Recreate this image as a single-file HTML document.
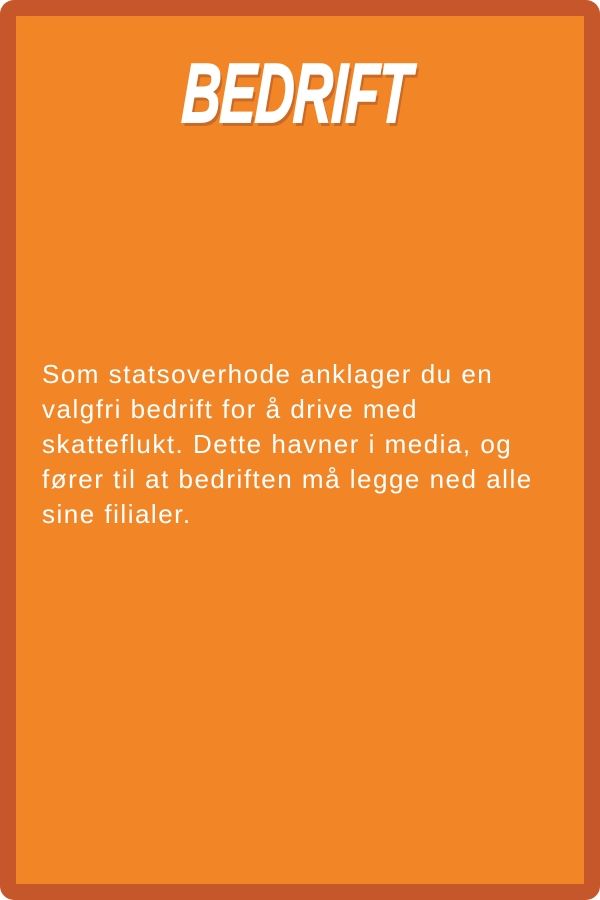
<!DOCTYPE html>
<html><head><style>
html,body{margin:0;padding:0;background:#fff;}
.card{position:absolute;left:0;top:0;width:600px;height:900px;background:#c6572a;border-radius:14px;}
.inner{position:absolute;left:16px;top:16px;width:568px;height:868px;background:#f28627;}
.title{position:absolute;left:-4px;top:48px;width:600px;text-align:center;font-family:"Liberation Sans",sans-serif;font-weight:bold;font-style:italic;font-size:84px;line-height:90px;color:#fff;text-shadow:4px 4px 0 #c96a26;}
.title span{display:inline-block;transform:scaleX(0.64) skewX(-4deg);transform-origin:center;letter-spacing:-1px;-webkit-text-stroke:2px #fff;}
.body{position:absolute;left:42px;top:357px;width:540px;font-family:"Liberation Sans",sans-serif;font-size:26px;letter-spacing:1.5px;line-height:35px;color:#fff;white-space:nowrap;}
</style></head><body>
<div class="card"><div class="inner"></div></div>
<div class="title"><span>BEDRIFT</span></div>
<div class="body">Som statsoverhode anklager du en<br>valgfri bedrift for å drive med<br>skatteflukt. Dette havner i media, og<br>fører til at bedriften må legge ned alle<br>sine filialer.</div>
</body></html>
